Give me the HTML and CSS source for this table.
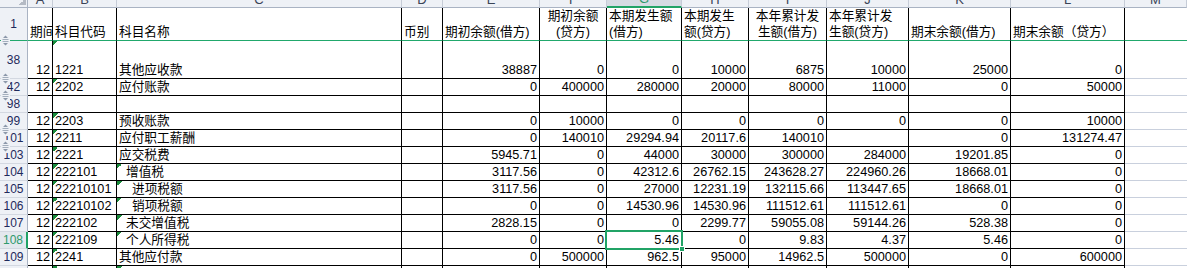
FILE: index.html
```html
<!DOCTYPE html>
<html lang="zh-CN">
<head>
<meta charset="utf-8">
<title>科目余额表</title>
<link rel="stylesheet" href="styles.css">
</head>
<body>
<div class="sheet">
  <div class="ch corner"></div>
  <div class="ch">A</div>
  <div class="ch">B</div>
  <div class="ch">C</div>
  <div class="ch">D</div>
  <div class="ch">E</div>
  <div class="ch">F</div>
  <div class="ch sel-col">G</div>
  <div class="ch">H</div>
  <div class="ch">I</div>
  <div class="ch">J</div>
  <div class="ch">K</div>
  <div class="ch">L</div>
  <div class="ch">M</div>

  <div class="rh r1">1</div>
  <div class="c r1"><span>期间</span></div>
  <div class="c r1"><span>科目代码</span></div>
  <div class="c r1"><span>科目名称</span></div>
  <div class="c r1"><span>币别</span></div>
  <div class="c r1"><span>期初余额(借方)</span></div>
  <div class="c r1 ctr"><span>期初余额<br>(贷方)</span></div>
  <div class="c r1"><span>本期发生额<br>(借方)</span></div>
  <div class="c r1"><span>本期发生<br>额(贷方)</span></div>
  <div class="c r1 ctr"><span>本年累计发<br>生额(借方)</span></div>
  <div class="c r1"><span>本年累计发<br>生额(贷方)</span></div>
  <div class="c r1"><span>期末余额(借方)</span></div>
  <div class="c r1"><span>期末余额（贷方）</span></div>
  <div class="m r1"></div>

  <div class="rh"><svg class="ob" viewBox="0 0 9 13" width="9" height="13"><path d="M2 4L4.5 1.5L7 4Z M2 9L7 9L4.5 11.5Z"/><path class="bar" d="M1.5 5.5h6M1.5 7.5h6"/></svg>38</div>
  <div class="c r">12</div>
  <div class="c t">1221</div>
  <div class="c">其他应收款</div>
  <div class="c"></div>
  <div class="c r">38887</div>
  <div class="c r">0</div>
  <div class="c r">0</div>
  <div class="c r">10000</div>
  <div class="c r">6875</div>
  <div class="c r">10000</div>
  <div class="c r">25000</div>
  <div class="c r">0</div>
  <div class="m"></div>

  <div class="rh"><svg class="ob" viewBox="0 0 9 13" width="9" height="13"><path d="M2 4L4.5 1.5L7 4Z M2 9L7 9L4.5 11.5Z"/><path class="bar" d="M1.5 5.5h6M1.5 7.5h6"/></svg>42</div>
  <div class="c r">12</div>
  <div class="c t">2202</div>
  <div class="c">应付账款</div>
  <div class="c"></div>
  <div class="c r">0</div>
  <div class="c r">400000</div>
  <div class="c r">280000</div>
  <div class="c r">20000</div>
  <div class="c r">80000</div>
  <div class="c r">11000</div>
  <div class="c r">0</div>
  <div class="c r">50000</div>
  <div class="m"></div>

  <div class="rh"><svg class="ob" viewBox="0 0 9 13" width="9" height="13"><path d="M2 4L4.5 1.5L7 4Z M2 9L7 9L4.5 11.5Z"/><path class="bar" d="M1.5 5.5h6M1.5 7.5h6"/></svg>98</div>
  <div class="c"></div>
  <div class="c"></div>
  <div class="c"></div>
  <div class="c"></div>
  <div class="c"></div>
  <div class="c"></div>
  <div class="c"></div>
  <div class="c"></div>
  <div class="c"></div>
  <div class="c"></div>
  <div class="c"></div>
  <div class="c"></div>
  <div class="m"></div>

  <div class="rh">99</div>
  <div class="c r">12</div>
  <div class="c t">2203</div>
  <div class="c">预收账款</div>
  <div class="c"></div>
  <div class="c r">0</div>
  <div class="c r">10000</div>
  <div class="c r">0</div>
  <div class="c r">0</div>
  <div class="c r">0</div>
  <div class="c r">0</div>
  <div class="c r">0</div>
  <div class="c r">10000</div>
  <div class="m"></div>

  <div class="rh"><svg class="ob" viewBox="0 0 9 13" width="9" height="13"><path d="M2 4L4.5 1.5L7 4Z M2 9L7 9L4.5 11.5Z"/><path class="bar" d="M1.5 5.5h6M1.5 7.5h6"/></svg>101</div>
  <div class="c r">12</div>
  <div class="c t">2211</div>
  <div class="c">应付职工薪酬</div>
  <div class="c"></div>
  <div class="c r">0</div>
  <div class="c r">140010</div>
  <div class="c r">29294.94</div>
  <div class="c r">20117.6</div>
  <div class="c r">140010</div>
  <div class="c r"></div>
  <div class="c r">0</div>
  <div class="c r">131274.47</div>
  <div class="m"></div>

  <div class="rh"><svg class="ob" viewBox="0 0 9 13" width="9" height="13"><path d="M2 4L4.5 1.5L7 4Z M2 9L7 9L4.5 11.5Z"/><path class="bar" d="M1.5 5.5h6M1.5 7.5h6"/></svg>103</div>
  <div class="c r">12</div>
  <div class="c t">2221</div>
  <div class="c">应交税费</div>
  <div class="c"></div>
  <div class="c r">5945.71</div>
  <div class="c r">0</div>
  <div class="c r">44000</div>
  <div class="c r">30000</div>
  <div class="c r">300000</div>
  <div class="c r">284000</div>
  <div class="c r">19201.85</div>
  <div class="c r">0</div>
  <div class="m"></div>

  <div class="rh">104</div>
  <div class="c r">12</div>
  <div class="c t">222101</div>
  <div class="c t i1">增值税</div>
  <div class="c"></div>
  <div class="c r">3117.56</div>
  <div class="c r">0</div>
  <div class="c r">42312.6</div>
  <div class="c r">26762.15</div>
  <div class="c r">243628.27</div>
  <div class="c r">224960.26</div>
  <div class="c r">18668.01</div>
  <div class="c r">0</div>
  <div class="m"></div>

  <div class="rh">105</div>
  <div class="c r">12</div>
  <div class="c t">22210101</div>
  <div class="c t i2">进项税额</div>
  <div class="c"></div>
  <div class="c r">3117.56</div>
  <div class="c r">0</div>
  <div class="c r">27000</div>
  <div class="c r">12231.19</div>
  <div class="c r">132115.66</div>
  <div class="c r">113447.65</div>
  <div class="c r">18668.01</div>
  <div class="c r">0</div>
  <div class="m"></div>

  <div class="rh">106</div>
  <div class="c r">12</div>
  <div class="c t">22210102</div>
  <div class="c t i2">销项税额</div>
  <div class="c"></div>
  <div class="c r">0</div>
  <div class="c r">0</div>
  <div class="c r">14530.96</div>
  <div class="c r">14530.96</div>
  <div class="c r">111512.61</div>
  <div class="c r">111512.61</div>
  <div class="c r">0</div>
  <div class="c r">0</div>
  <div class="m"></div>

  <div class="rh">107</div>
  <div class="c r">12</div>
  <div class="c t">222102</div>
  <div class="c t i1">未交增值税</div>
  <div class="c"></div>
  <div class="c r">2828.15</div>
  <div class="c r">0</div>
  <div class="c r">0</div>
  <div class="c r">2299.77</div>
  <div class="c r">59055.08</div>
  <div class="c r">59144.26</div>
  <div class="c r">528.38</div>
  <div class="c r">0</div>
  <div class="m"></div>

  <div class="rh sel-row">108</div>
  <div class="c r">12</div>
  <div class="c t">222109</div>
  <div class="c t i1">个人所得税</div>
  <div class="c"></div>
  <div class="c r">0</div>
  <div class="c r">0</div>
  <div class="c r sel">5.46</div>
  <div class="c r">0</div>
  <div class="c r">9.83</div>
  <div class="c r">4.37</div>
  <div class="c r">5.46</div>
  <div class="c r">0</div>
  <div class="m"></div>

  <div class="rh">109</div>
  <div class="c r">12</div>
  <div class="c t">2241</div>
  <div class="c">其他应付款</div>
  <div class="c"></div>
  <div class="c r">0</div>
  <div class="c r">500000</div>
  <div class="c r">962.5</div>
  <div class="c r">95000</div>
  <div class="c r">14962.5</div>
  <div class="c r">500000</div>
  <div class="c r">0</div>
  <div class="c r">600000</div>
  <div class="m"></div>

  <div class="rh">110</div>
  <div class="c"></div>
  <div class="c t"></div>
  <div class="c t"></div>
  <div class="c"></div>
  <div class="c"></div>
  <div class="c"></div>
  <div class="c"></div>
  <div class="c"></div>
  <div class="c"></div>
  <div class="c"></div>
  <div class="c"></div>
  <div class="c"></div>
  <div class="m"></div>
</div>
</body>
</html>
```

FILE: styles.css
```css
html, body {
  margin: 0;
  padding: 0;
  background: #ffffff;
}

body {
  width: 1187px;
  height: 268px;
  overflow: hidden;
  font-family: "Liberation Sans", "Noto Sans CJK SC", sans-serif;
  font-size: 12.7px;
  color: #000000;
}

.sheet {
  display: grid;
  grid-template-columns: 28px 25px 64px 285px 41px 97px 67px 75px 67px 78px 82px 102px 114px 62px;
  grid-template-rows: 22px 33px 38px repeat(12, 17px);
  margin-top: -14px;
}

/* column headers */
.ch {
  box-sizing: border-box;
  display: flex;
  align-items: flex-end;
  justify-content: center;
  line-height: 15px;
  font-size: 13px;
  color: #3a4457;
  background: #eef1f6;
  border-right: 1px solid #c6ccd7;
  border-bottom: 1px solid #a9b3c3;
  overflow: hidden;
}

.ch.corner {
  background:
    linear-gradient(135deg, transparent 50%, #b4bac4 50%) right 1px bottom 2px / 7px 7px no-repeat,
    #eef1f6;
  border-right-color: #a9b3c3;
}

.ch.sel-col {
  background: #d6dbe3;
  color: #2e9a6c;
  border-bottom: 2px solid #21a366;
}

/* row headers */
.rh {
  position: relative;
  box-sizing: border-box;
  display: flex;
  align-items: center;
  justify-content: center;
  font-size: 12px;
  color: #1e2a5c;
  background: #eef1f6;
  border-right: 1px solid #a9b3c3;
  border-bottom: 1px solid #d3d8e1;
}

.rh.sel-row {
  color: #2e9a6c;
  border-right: 2px solid #21a366;
  background: #e3e8ee;
}

.ob {
  position: absolute;
  left: 1px;
  top: -7px;
  background: #eef1f6;
  fill: #8c98aa;
}

.ob .bar {
  stroke: #a3aebd;
  stroke-width: 1;
  fill: none;
}

/* data cells */
.c {
  box-sizing: border-box;
  display: flex;
  align-items: flex-end;
  justify-content: flex-start;
  padding: 0 2px;
  line-height: 15px;
  white-space: nowrap;
  overflow: hidden;
  border-right: 1px solid #000000;
  border-bottom: 1px solid #000000;
}

.c.r {
  justify-content: flex-end;
}

.c.t {
  background: linear-gradient(135deg, #1a8c3c 50%, transparent 50%) 0 0 / 5px 5px no-repeat;
}

.c.i1 {
  padding-left: 9px;
}

.c.i2 {
  padding-left: 15px;
}

.c.ctr {
  justify-content: center;
  text-align: center;
}

.r1 {
  line-height: 16px;
  border-bottom: 1px solid #21a86c;
}

.c.r1 span {
  display: block;
}

/* selected cell */
.c.sel {
  position: relative;
  overflow: visible;
}

.c.sel::after {
  content: "";
  position: absolute;
  left: -2px;
  top: -2px;
  right: -2px;
  bottom: -2px;
  border: 2px solid #21a366;
}

.c.sel::before {
  content: "";
  position: absolute;
  right: -4px;
  bottom: -4px;
  width: 4px;
  height: 4px;
  background: #21a366;
  border: 1px solid #ffffff;
  z-index: 1;
}

/* empty column M */
.m {
  box-sizing: border-box;
  border-bottom: 1px solid #c9d0dd;
}

.m.r1 {
  border-bottom: 1px solid #21a86c;
}
```
